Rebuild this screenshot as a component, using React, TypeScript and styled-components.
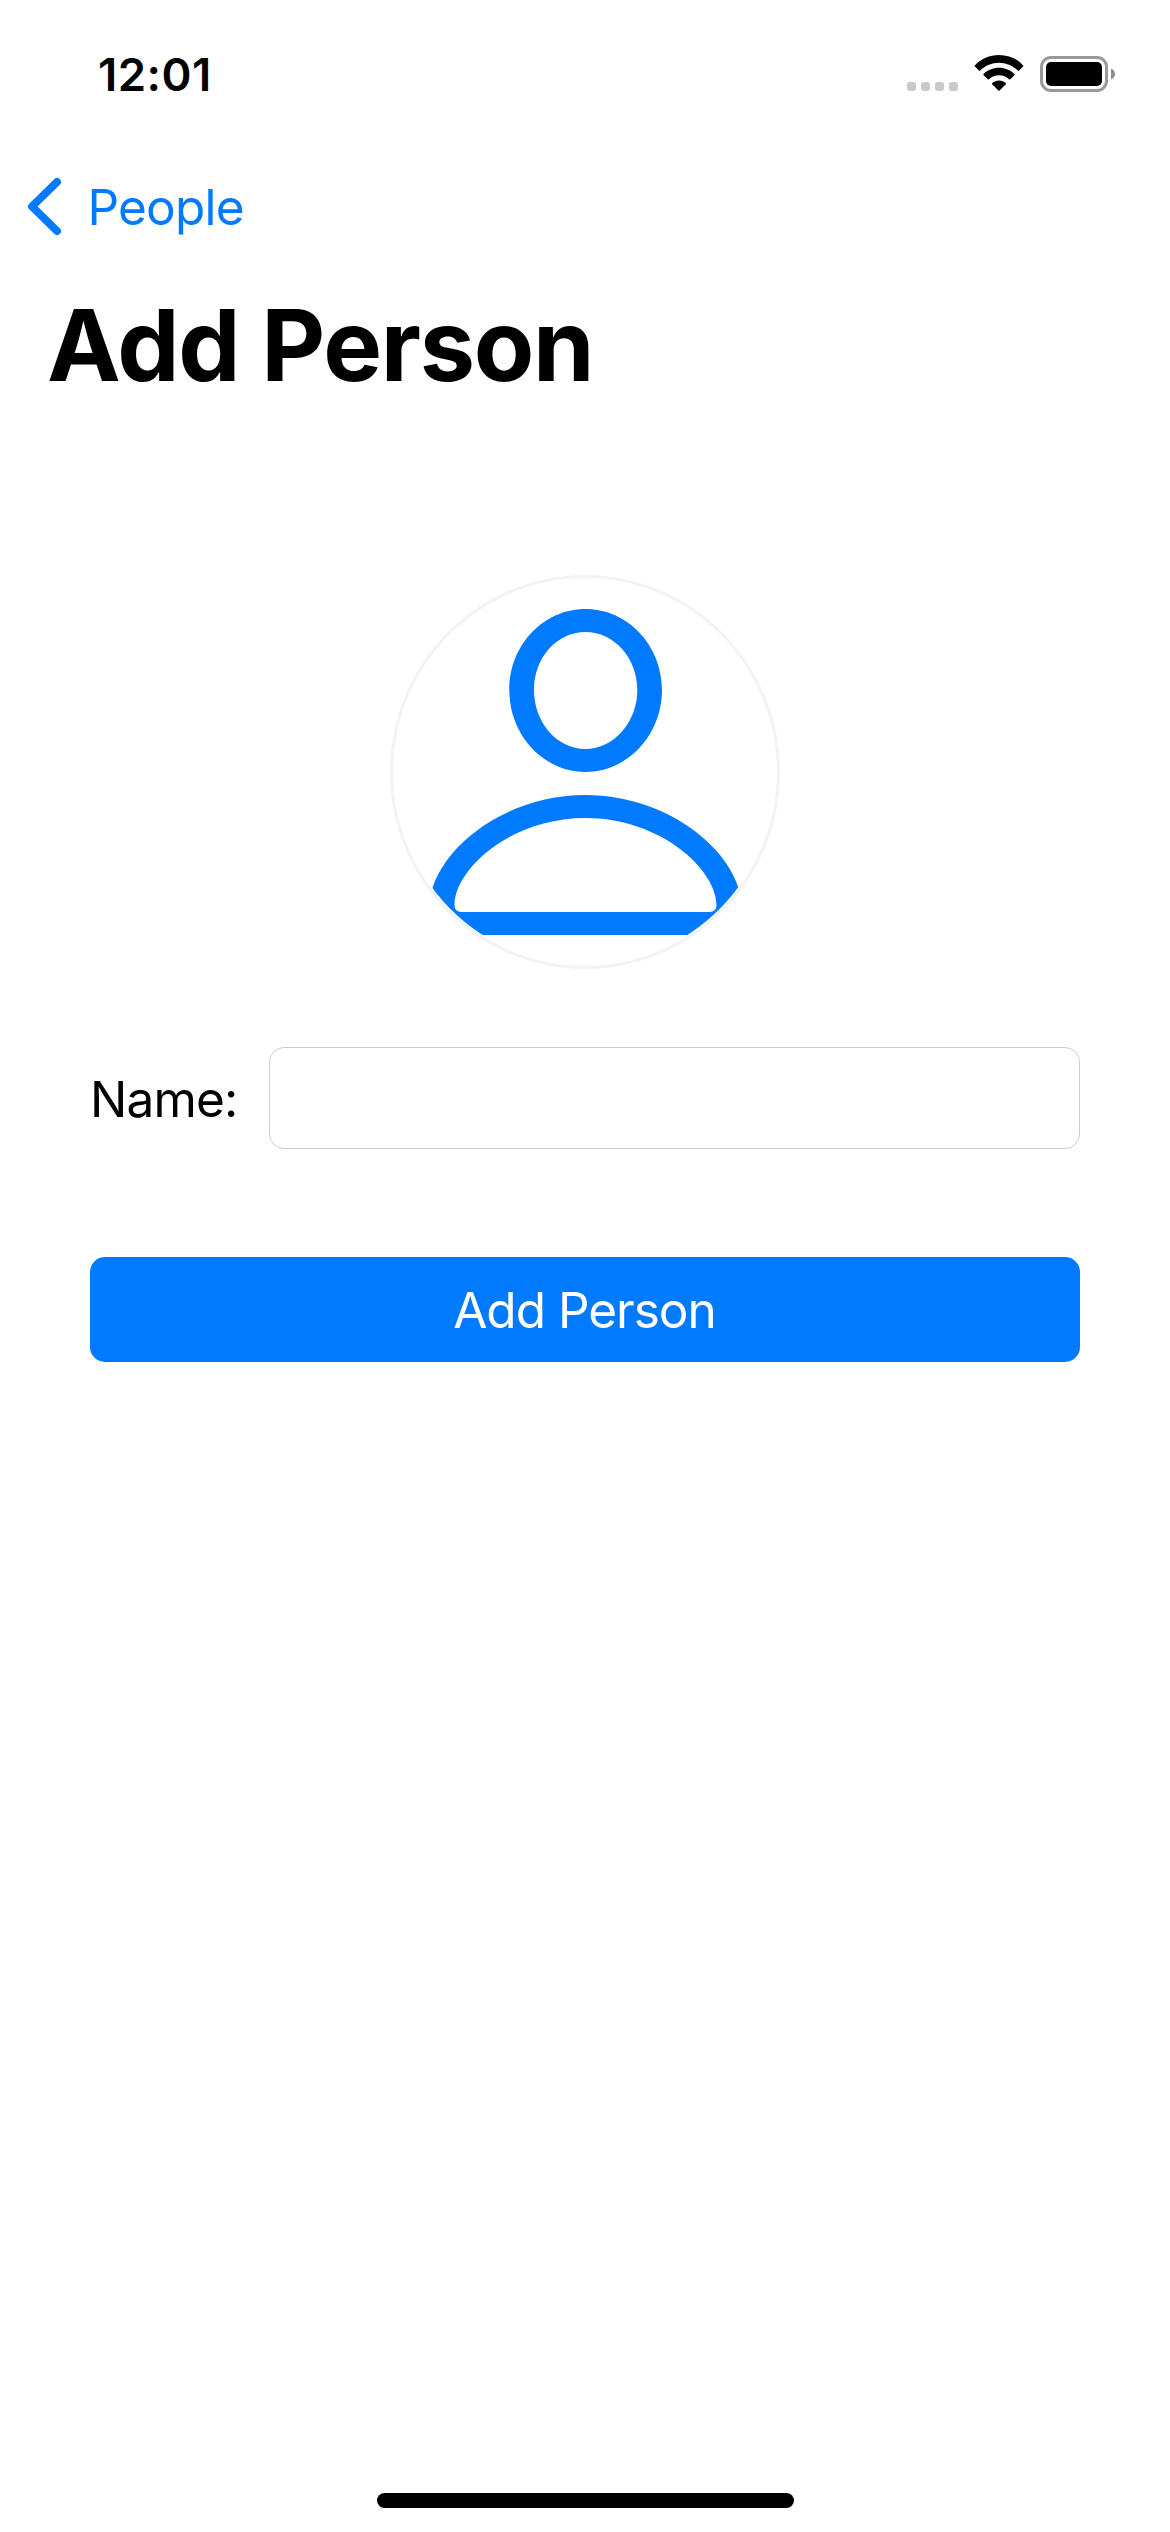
import React from "react";
import styled, { createGlobalStyle } from "styled-components";

const BLUE = "#007aff";

const GlobalStyle = createGlobalStyle`
  *, *::before, *::after { box-sizing: border-box; }
  body { margin: 0; background: #fff; }
`;

const Screen = styled.div`
  width: 1170px;
  height: 2532px;
  display: flex;
  flex-direction: column;
  background: #fff;
  color: #000;
  font-family: Inter, "Liberation Sans", sans-serif;
  overflow: hidden;
`;

const StatusBar = styled.header`
  height: 149px;
  flex: none;
  display: flex;
  align-items: center;
  justify-content: space-between;
  padding: 0 54px 0 98px;
`;

const Time = styled.time`
  font-size: 45.5px;
  font-weight: 600;
  line-height: 56px;
  letter-spacing: 0.5px;
  white-space: nowrap;
`;

const StatusGlyphs = styled.svg`
  display: block;
  margin-bottom: 1px;
`;

const NavBar = styled.nav`
  height: 116px;
  flex: none;
  display: flex;
  align-items: center;
`;

const BackButton = styled.button`
  display: flex;
  align-items: center;
  gap: 22.5px;
  padding: 0 0 0 27px;
  border: 0;
  background: none;
  color: ${BLUE};
  font: inherit;
  font-size: 49.5px;
  line-height: 60px;
  letter-spacing: -0.8px;
  white-space: nowrap;
`;

const Title = styled.h1`
  flex: none;
  margin: 0;
  padding: 0 47px;
  height: 160px;
  font-size: 98.8px;
  font-weight: 700;
  line-height: 161px;
  letter-spacing: -1.3px;
  white-space: nowrap;
`;

const Form = styled.main`
  flex: 1;
  display: flex;
  flex-direction: column;
  align-items: stretch;
  padding: 150px 90px 0;
`;

const Avatar = styled.div`
  align-self: center;
  width: 390px;
  height: 394px;
  border: 3px solid #f2f2f7;
  border-radius: 50%;
  overflow: hidden;

  svg {
    display: block;
    clip-path: ellipse(191px 193px at 50% 50%);
  }
`;

const Field = styled.label`
  display: flex;
  align-items: center;
  justify-content: space-between;
  margin-top: 78px;
`;

const FieldLabel = styled.span`
  font-size: 49.5px;
  line-height: 60px;
  letter-spacing: -0.8px;
  white-space: nowrap;
  padding-top: 2px;
`;

const TextInput = styled.input`
  width: 811px;
  height: 102px;
  padding: 0 21px;
  border: 1px solid #cbcbcc;
  border-radius: 15px;
  background: #fff;
  font: inherit;
  font-size: 49.5px;
  outline: none;
`;

const SubmitButton = styled.button`
  height: 105px;
  margin-top: 108px;
  padding: 0;
  border: 0;
  border-radius: 15px;
  background: ${BLUE};
  color: #fff;
  font: inherit;
  font-size: 49.5px;
  line-height: 60px;
  letter-spacing: -1px;
  text-indent: -1px;
  white-space: nowrap;
`;

const HomeArea = styled.footer`
  flex: none;
  display: flex;
  justify-content: center;
  height: 39px;
`;

const HomeIndicator = styled.div`
  width: 417px;
  height: 15px;
  border-radius: 8px;
  background: #000;
`;

function StatusIcons() {
  return (
    <StatusGlyphs width="209" height="38" viewBox="907 55 209 38">
      {[907, 921, 935, 949].map((x) => (
        <rect key={x} x={x} y="82" width="9" height="9" rx="3" fill="#c9c9c9" />
      ))}
      <path d="M999 55C1008.400 55 1017.200 58.800 1023 65.300Q1023.600 66 1023 66.600L1019.200 70.400Q1018.500 71 1017.800 70.400C1012.700 65.500 1006 62.700 999 62.700S985.300 65.500 980.200 70.400Q979.500 71 978.800 70.400L975 66.600Q974.400 66 975 65.300C980.800 58.800 989.600 55 999 55Z" />
      <path d="M999 67.700C1004.900 67.700 1010.300 70 1014.400 73.900Q1015 74.500 1014.400 75.200L1010.300 79.200Q1009.700 79.700 1009 79.200C1006.300 76.700 1002.800 75.300 999 75.300S991.700 76.700 989 79.200Q988.300 79.700 987.700 79.200L983.600 75.200Q983 74.500 983.600 73.900C987.700 70 993.100 67.700 999 67.700Z" />
      <path d="M999 80.500C1001.600 80.500 1003.900 81.400 1005.700 82.900Q1006.400 83.500 1005.800 84.200L999.600 90.500Q999 91.100 998.400 90.500L992.200 84.200Q991.600 83.500 992.300 82.900C994.100 81.400 996.400 80.500 999 80.500Z" />
      <rect x="1041.500" y="57.500" width="65" height="33" rx="9.500" fill="none" stroke="#999" strokeWidth="3" />
      <rect x="1046" y="62" width="56" height="24" rx="5" />
      <path d="M1111 68.500C1113.400 69.500 1115 71.600 1115 74S1113.400 78.500 1111 79.500Z" fill="#8c8c8c" />
    </StatusGlyphs>
  );
}

function BackChevron() {
  return (
    <svg width="38" height="60" viewBox="27 177 38 60" fill="none">
      <path d="M57 182L32 206.500L57 231" stroke={BLUE} strokeWidth="8" strokeLinecap="round" strokeLinejoin="round" />
    </svg>
  );
}

function PersonIcon() {
  return (
    <svg width="384" height="388" viewBox="393 578 384 388" fill={BLUE} fillRule="evenodd">
      <path d="M585.500 609C627.500 609 662 645 662 690S627.500 772 585.500 772S509.300 735 509.300 690S543.500 609 585.500 609ZM585.500 632C557 632 534 657.500 534 690S557 749 585.500 749S637.300 722 637.300 690S614 632 585.500 632Z" />
      <path d="M585.500 795C671 795 742 855 742 909Q742 935 719 935H452Q429 935 429 909C429 855 500 795 585.500 795ZM585.500 818C510 818 454.500 870 454.500 905Q454.500 912 461.500 912H709.500Q716.500 912 716.500 905C716.500 870 661 818 585.500 818Z" />
    </svg>
  );
}

export default function App() {
  return (
    <>
      <GlobalStyle />
      <Screen>
        <StatusBar>
          <Time>12:01</Time>
          <StatusIcons />
        </StatusBar>
        <NavBar>
          <BackButton type="button">
            <BackChevron />
            People
          </BackButton>
        </NavBar>
        <Title>Add Person</Title>
        <Form>
          <Avatar>
            <PersonIcon />
          </Avatar>
          <Field>
            <FieldLabel>Name:</FieldLabel>
            <TextInput type="text" />
          </Field>
          <SubmitButton type="button">Add Person</SubmitButton>
        </Form>
        <HomeArea>
          <HomeIndicator />
        </HomeArea>
      </Screen>
    </>
  );
}
